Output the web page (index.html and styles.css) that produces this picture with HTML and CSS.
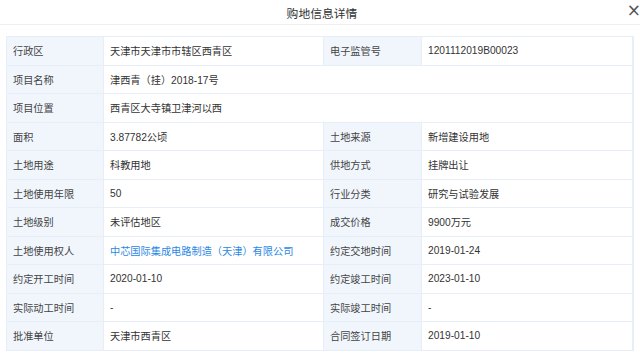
FILE: index.html
```html
<!DOCTYPE html>
<html lang="zh">
<head>
<meta charset="utf-8">
<title>购地信息详情</title>
<link rel="stylesheet" href="styles.css">
</head>
<body>
<div class="dialog">
  <div class="header">
    <span class="side"></span>
    <span class="title">购地信息详情</span>
    <span class="side end"><span class="close">×</span></span>
  </div>
  <div class="body">
    <div class="grid">
      <div class="lbl">行政区</div><div class="val">天津市天津市市辖区西青区</div><div class="lbl">电子监管号</div><div class="val">1201112019B00023</div>
      <div class="lbl">项目名称</div><div class="val span3">津西青（挂）2018-17号</div>
      <div class="lbl">项目位置</div><div class="val span3">西青区大寺镇卫津河以西</div>
      <div class="lbl">面积</div><div class="val">3.87782公顷</div><div class="lbl">土地来源</div><div class="val">新增建设用地</div>
      <div class="lbl">土地用途</div><div class="val">科教用地</div><div class="lbl">供地方式</div><div class="val">挂牌出让</div>
      <div class="lbl">土地使用年限</div><div class="val">50</div><div class="lbl">行业分类</div><div class="val">研究与试验发展</div>
      <div class="lbl">土地级别</div><div class="val">未评估地区</div><div class="lbl">成交价格</div><div class="val">9900万元</div>
      <div class="lbl">土地使用权人</div><div class="val link">中芯国际集成电路制造（天津）有限公司</div><div class="lbl">约定交地时间</div><div class="val">2019-01-24</div>
      <div class="lbl">约定开工时间</div><div class="val">2020-01-10</div><div class="lbl">约定竣工时间</div><div class="val">2023-01-10</div>
      <div class="lbl">实际动工时间</div><div class="val">-</div><div class="lbl">实际竣工时间</div><div class="val">-</div>
      <div class="lbl">批准单位</div><div class="val">天津市西青区</div><div class="lbl">合同签订日期</div><div class="val">2019-01-10</div>
    </div>
  </div>
</div>
</body>
</html>
```

FILE: styles.css
```css
* { box-sizing: border-box; }
html, body { margin: 0; padding: 0; background: #fff; }
body {
  font-family: "Liberation Sans", "Noto Sans CJK SC", sans-serif;
  color: #333;
  width: 640px;
  height: 357px;
  overflow: hidden;
}
.header {
  height: 25px;
  border-bottom: 1px solid #efefef;
  display: flex;
  align-items: center;
}
.side { flex: 1; display: flex; align-items: center; height: 100%; }
.side.end { justify-content: flex-end; }
.title {
  font-size: 11.8px;
  color: #333;
  margin-left: 4px;
}
.close {
  font-family: "DejaVu Sans", sans-serif;
  font-size: 17px;
  line-height: 1;
  color: #555;
  margin-right: -1px;
  margin-top: -3px;
}
.body {
  padding: 11px 6px 0 6px;
}
.grid {
  display: grid;
  grid-template-columns: 96px 219px 97px 210px;
  grid-auto-rows: 27.5px;
  gap: 1px;
  padding: 1px;
  background: #e7eef7;
  width: 628px;
}
.lbl, .val {
  display: flex;
  align-items: center;
  padding-left: 6px;
  font-size: 10.2px;
  white-space: nowrap;
}
.lbl { background: #f1f6fd; color: #444; }
.val { background: #fff; color: #333; }
.span3 { grid-column: span 3; }
.link { color: #2b88e6; }
```
